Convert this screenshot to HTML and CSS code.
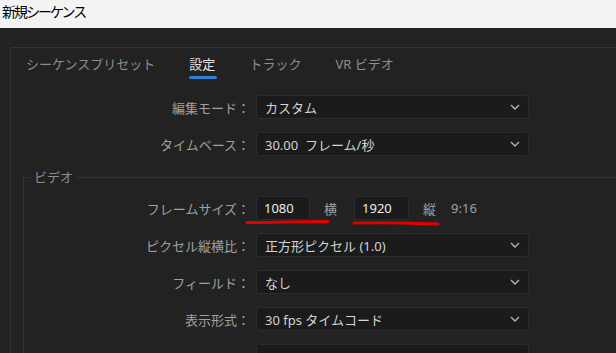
FILE: index.html
```html
<!DOCTYPE html>
<html lang="ja">
<head>
    <meta charset="UTF-8">
    <meta name="viewport" content="width=device-width, initial-scale=1.0">
    <title>新規シーケンス</title>
    <link rel="stylesheet" href="styles.css">
</head>
<body>
    <div class="titlebar">新規シーケンス</div>
    <div class="panel">
        <div class="tabs">
            <span class="tab">シーケンスプリセット</span>
            <span class="tab active">設定</span>
            <span class="tab">トラック</span>
            <span class="tab">VR ビデオ</span>
        </div>
        <div class="form">
            <div class="row">
                <label class="label">編集モード：</label>
                <div class="select">
                    <span>カスタム</span>
                    <svg class="chevron" width="10" height="6" viewBox="0 0 10 6"><polyline points="1,1 5,5 9,1"/></svg>
                </div>
            </div>
            <div class="row">
                <label class="label">タイムベース：</label>
                <div class="select">
                    <span>30.00&nbsp; フレーム/秒</span>
                    <svg class="chevron" width="10" height="6" viewBox="0 0 10 6"><polyline points="1,1 5,5 9,1"/></svg>
                </div>
            </div>

            <fieldset class="group">
                <legend>ビデオ</legend>
                <div class="row">
                    <label class="label">フレームサイズ：</label>
                    <div class="num">1080</div>
                    <span class="unit">横</span>
                    <div class="num second">1920</div>
                    <span class="unit">縦</span>
                    <span class="ratio">9:16</span>
                </div>
                <div class="row">
                    <label class="label">ピクセル縦横比：</label>
                    <div class="select">
                        <span>正方形ピクセル (1.0)</span>
                        <svg class="chevron" width="10" height="6" viewBox="0 0 10 6"><polyline points="1,1 5,5 9,1"/></svg>
                    </div>
                </div>
                <div class="row">
                    <label class="label">フィールド：</label>
                    <div class="select">
                        <span>なし</span>
                        <svg class="chevron" width="10" height="6" viewBox="0 0 10 6"><polyline points="1,1 5,5 9,1"/></svg>
                    </div>
                </div>
                <div class="row">
                    <label class="label">表示形式：</label>
                    <div class="select">
                        <span>30 fps タイムコード</span>
                        <svg class="chevron" width="10" height="6" viewBox="0 0 10 6"><polyline points="1,1 5,5 9,1"/></svg>
                    </div>
                </div>
                <div class="row">
                    <label class="label"></label>
                    <div class="select"><span></span></div>
                </div>
            </fieldset>
        </div>
    </div>

    <!-- red pen marks drawn over the screenshot -->
    <svg class="marks" width="616" height="353" viewBox="0 0 616 353">
        <path d="M247 222.5 C 275 223, 300 221, 328 221.5"/>
        <path d="M354 223 C 385 222, 410 223, 438 224"/>
    </svg>
</body>
</html>
```

FILE: styles.css
```css
body {
    margin: 0;
    width: 616px;
    height: 353px;
    overflow: hidden;
    position: relative;
    background-color: #222222;
    font-family: "Noto Sans", "Noto Sans CJK JP", sans-serif;
    font-size: 13px;
    color: #d4d4d4;
}
.titlebar {
    height: 28px;
    background: #f3f3f3;
    color: #000;
    font-size: 14px;
    line-height: 24px;
    padding-left: 2px;
    letter-spacing: -2px;
}
.panel {
    margin: 19px 0 0 10px;
    border-top: 1px solid #333;
    border-left: 1px solid #333;
}
.tabs {
    display: flex;
    gap: 34px;
    padding: 7px 0 0 15px;
}
.tab {
    position: relative;
    color: #8e8e8e;
    line-height: 18px;
    padding-bottom: 6px;
}
.tab.active {
    color: #e2e2e2;
}
.tab.active::after {
    content: "";
    position: absolute;
    left: 0;
    bottom: 0;
    width: 28px;
    height: 3px;
    border-radius: 2px;
    background: #2f80d4;
}
.form {
    padding-top: 16px;
}
.row {
    display: flex;
    align-items: center;
    height: 24px;
    margin-bottom: 13px;
}
.label {
    width: 239px;
    margin-right: 6px;
    text-align: right;
    color: #a0a0a0;
    white-space: nowrap;
}
.select {
    box-sizing: border-box;
    width: 273px;
    height: 24px;
    padding: 0 8px;
    display: flex;
    justify-content: space-between;
    align-items: center;
    background: #1b1b1b;
    border: 1px solid #2c2c2c;
    border-radius: 3px;
}
.chevron polyline {
    fill: none;
    stroke: #b4b4b4;
    stroke-width: 1.4;
}
.group {
    margin: 0 0 0 12px;
    padding: 11px 0 0 0;
    border: none;
    border-top: 1px solid #333;
    border-left: 1px solid #333;
}
.group legend {
    margin-left: 6px;
    padding: 0 4px;
    line-height: 16px;
    color: #8e8e8e;
}
.group .label {
    width: 226px;
}
.num {
    box-sizing: border-box;
    width: 54px;
    height: 24px;
    padding: 0 7px;
    line-height: 22px;
    background: #1b1b1b;
    border: 1px solid #2c2c2c;
    border-radius: 3px;
    color: #ececec;
}
.num.second {
    width: 55px;
    margin-left: 17px;
}
.unit {
    margin-left: 14px;
    color: #a0a0a0;
}
.unit + .ratio {
    margin-left: 15px;
}
.ratio {
    color: #a0a0a0;
}
.marks {
    position: absolute;
    top: 0;
    left: 0;
    pointer-events: none;
}
.marks path {
    fill: none;
    stroke: #e00000;
    stroke-width: 3;
    stroke-linecap: round;
}
```
